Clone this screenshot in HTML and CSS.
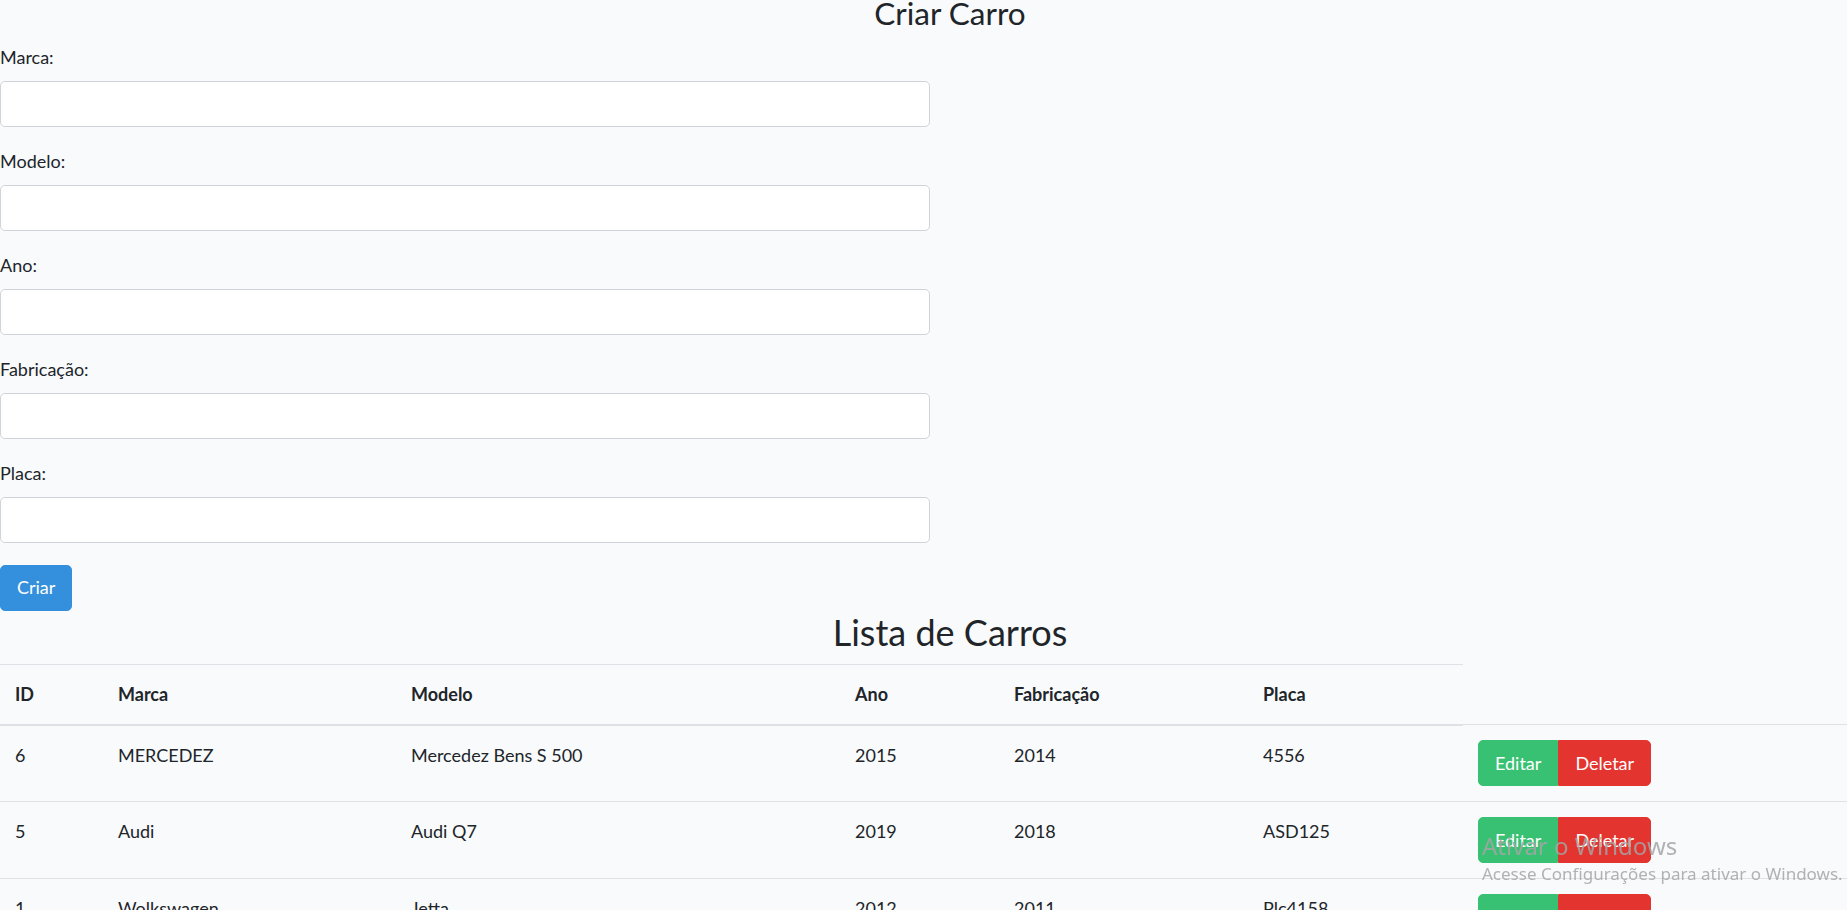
FILE: index.html
```html
<!DOCTYPE html>
<html lang="pt-BR">
<head>
<meta charset="utf-8">
<title>Carros</title>
<link rel="stylesheet" href="styles.css">
</head>
<body>
<div class="page">
  <h3 class="title-create">Criar Carro</h3>
  <form class="car-form">
    <div class="form-group">
      <label class="form-label">Marca:</label>
      <input class="form-control" type="text">
    </div>
    <div class="form-group">
      <label class="form-label">Modelo:</label>
      <input class="form-control" type="text">
    </div>
    <div class="form-group">
      <label class="form-label">Ano:</label>
      <input class="form-control" type="text">
    </div>
    <div class="form-group">
      <label class="form-label">Fabricação:</label>
      <input class="form-control" type="text">
    </div>
    <div class="form-group">
      <label class="form-label">Placa:</label>
      <input class="form-control" type="text">
    </div>
    <button class="btn btn-primary btn-submit" type="button">Criar</button>
  </form>
  <h2 class="title-list">Lista de Carros</h2>
  <table class="table">
    <thead>
      <tr>
        <th class="col-id">ID</th>
        <th class="col-marca">Marca</th>
        <th class="col-modelo">Modelo</th>
        <th class="col-ano">Ano</th>
        <th class="col-fab">Fabricação</th>
        <th class="col-placa">Placa</th>
      </tr>
    </thead>
    <tbody>
      <tr>
        <td>6</td><td>MERCEDEZ</td><td>Mercedez Bens S 500</td><td>2015</td><td>2014</td><td>4556</td>
        <td><div class="btn-group"><button class="btn btn-success" type="button">Editar</button><button class="btn btn-danger" type="button">Deletar</button></div></td>
      </tr>
      <tr>
        <td>5</td><td>Audi</td><td>Audi Q7</td><td>2019</td><td>2018</td><td>ASD125</td>
        <td><div class="btn-group"><button class="btn btn-success" type="button">Editar</button><button class="btn btn-danger" type="button">Deletar</button></div></td>
      </tr>
      <tr>
        <td>1</td><td>Wolkswagen</td><td>Jetta</td><td>2012</td><td>2011</td><td>Plc4158</td>
        <td><div class="btn-group"><button class="btn btn-success" type="button">Editar</button><button class="btn btn-danger" type="button">Deletar</button></div></td>
      </tr>
    </tbody>
  </table>
</div>
<div class="watermark">
  <div class="wm-title">Ativar o Windows</div>
  <div class="wm-sub">Acesse Configurações para ativar o Windows.</div>
</div>
</body>
</html>
```
FILE: styles.css
```css
html, body {
  margin: 0;
  padding: 0;
  background: #f8fafc;
}
body {
  font-family: "Lato", "Noto Sans", sans-serif;
  font-size: 18px;
  line-height: 28.8px;
  color: #212529;
  overflow: hidden;
}
.page {
  width: 1900px;
  margin-top: -5px;
}
.title-create {
  margin: 0 0 10px;
  font-size: 31.5px;
  line-height: 37.8px;
  font-weight: 400;
  text-align: center;
}
.car-form {
  width: 930px;
}
.form-group {
  margin-bottom: 20px;
}
.form-label {
  display: block;
  line-height: 28px;
  margin-bottom: 10px;
}
.form-control {
  display: block;
  box-sizing: border-box;
  width: 930px;
  height: 46px;
  margin: 0;
  padding: 7.5px 15px;
  font: inherit;
  background: #fff;
  border: 1px solid #ced4da;
  border-radius: 5px;
}
.btn {
  display: inline-block;
  box-sizing: border-box;
  height: 46px;
  margin: 0;
  padding: 7.5px 16px;
  font: inherit;
  line-height: 28.8px;
  color: #fff;
  border: 1px solid transparent;
  border-radius: 5px;
  cursor: pointer;
}
.btn-submit {
  margin-top: 2px;
  vertical-align: top;
}
.btn-primary {
  background: #3490dc;
  border-color: #3490dc;
}
.btn-success {
  background: #38c172;
  border-color: #38c172;
}
.btn-danger {
  background: #e3342f;
  border-color: #e3342f;
}
.btn-group {
  display: inline-flex;
  vertical-align: middle;
}
.btn-group .btn-success {
  border-top-right-radius: 0;
  border-bottom-right-radius: 0;
}
.btn-group .btn-danger {
  border-top-left-radius: 0;
  border-bottom-left-radius: 0;
}
.title-list {
  margin: 0 0 10px;
  font-size: 36px;
  line-height: 43.2px;
  font-weight: 400;
  text-align: center;
}
.table {
  width: 100%;
  table-layout: fixed;
  border-collapse: collapse;
}
.table th,
.table td {
  padding: 15px;
  text-align: left;
  vertical-align: top;
  border-top: 1px solid #dee2e6;
  line-height: 28.8px;
}
.table thead th {
  font-weight: 700;
  border-bottom: 2px solid #dee2e6;
  vertical-align: bottom;
}
.col-id { width: 73px; }
.col-marca { width: 263px; }
.col-modelo { width: 414px; }
.col-ano { width: 129px; }
.col-fab { width: 219px; }
.col-placa { width: 185px; }
.watermark {
  position: fixed;
  z-index: 10;
  left: 1482px;
  top: 829px;
  font-family: "Noto Sans", "Open Sans", sans-serif;
  color: rgba(165, 165, 165, 0.85);
  pointer-events: none;
}
.wm-title {
  font-size: 24px;
  line-height: 33px;
}
.wm-sub {
  font-size: 17px;
  line-height: 24px;
}
```
